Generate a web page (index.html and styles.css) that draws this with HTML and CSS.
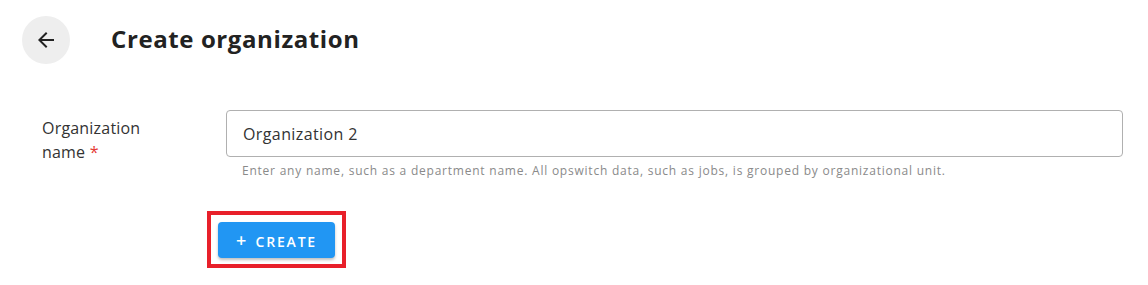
FILE: index.html
```html
<html>

<head>
	<title>Create organization</title>
	<meta name="viewport" content="width=device-width, initial-scale=1.0">

	<link rel="stylesheet" href="styles.css">
</head>

<body>
	<div class="header">
		<button class="back-btn" aria-label="Back">
			<svg width="24" height="24" viewBox="0 0 24 24">
				<path d="M20 11H7.83l5.59-5.59L12 4l-8 8 8 8 1.41-1.41L7.83 13H20v-2z" fill="#222" />
			</svg>
		</button>
		<h1>Create organization</h1>
	</div>

	<div class="form-row">
		<label class="field-label" for="org_name">Organization<br>name <span class="required">*</span></label>
		<div class="field">
			<input id="org_name" class="text-input" type="text" value="Organization 2">
			<p class="hint">Enter any name, such as a department name. All opswitch data, such as jobs, is grouped by organizational unit.</p>
		</div>
	</div>

	<div class="actions">
		<div class="highlight">
			<button class="create-btn"><span class="plus">+</span> CREATE</button>
		</div>
	</div>
</body>

</html>
```

FILE: styles.css
```css
body {
	font-family: 'Open Sans', sans-serif;
	color: #333;
	background-color: #fff;
	margin: 0;
	width: 100%;
}

.header {
	display: flex;
	align-items: center;
	padding: 16px 22px 0 22px;
}

.back-btn {
	width: 48px;
	height: 48px;
	border: 0;
	border-radius: 50%;
	background-color: #eeeeee;
	display: flex;
	align-items: center;
	justify-content: center;
	padding: 0;
}

h1 {
	font-size: 24px;
	font-weight: 700;
	letter-spacing: 0.6px;
	color: #222;
	margin: 0 0 4px 41px;
}

.form-row {
	display: flex;
	padding: 46px 25px 0 42px;
}

.field-label {
	width: 184px;
	flex-shrink: 0;
	font-size: 16px;
	line-height: 24px;
	letter-spacing: 0.2px;
	color: #333;
	padding-top: 6px;
	box-sizing: border-box;
}

.required {
	color: #e53935;
}

.field {
	flex: 1;
}

.text-input {
	width: 100%;
	height: 47px;
	box-sizing: border-box;
	border: 1px solid #b0b0b0;
	border-radius: 4px;
	padding: 0 16px;
	font-family: 'Open Sans', sans-serif;
	font-size: 16px;
	letter-spacing: 0.4px;
	color: #333;
	outline: none;
}

.hint {
	margin: 5px 0 0 16px;
	font-size: 12px;
	letter-spacing: 0.77px;
	color: #8a8a8a;
}

.actions {
	display: flex;
	padding: 32px 0 0 207px;
}

.highlight {
	border: 4px solid #e8202a;
	padding: 7px 7px 6px 7px;
}

.create-btn {
	background-color: #2196f3;
	border: 0;
	border-radius: 4px;
	color: #fff;
	font-family: 'Open Sans', sans-serif;
	font-size: 14px;
	font-weight: 600;
	letter-spacing: 1.8px;
	height: 36px;
	width: 117px;
	padding: 0;
	box-shadow: 0 2px 3px rgba(0, 0, 0, 0.25);
}

.plus {
	font-size: 18px;
	margin-right: 2px;
}
```
